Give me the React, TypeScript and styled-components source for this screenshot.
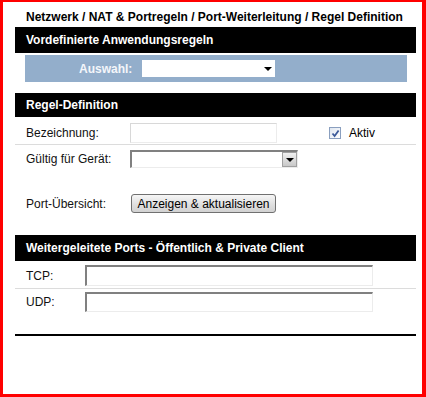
import React from "react";
import styled, { createGlobalStyle } from "styled-components";

const GlobalStyle = createGlobalStyle`
  body {
    margin: 0;
    background: #fff;
    font-family: "Liberation Sans", Arial, sans-serif;
    font-size: 12px;
    color: #000;
  }
`;

const Frame = styled.div`
  width: 426px;
  height: 397px;
  box-sizing: border-box;
  border: 3px solid #ff0000;
  border-top-width: 2px;
  border-right-width: 4px;
  padding: 0 6px 0 12px;
  background: #fff;
`;

const Title = styled.div`
  font-weight: 700;
  line-height: 14px;
  padding: 8px 0 3px 11px;
`;

const SectionBar = styled.div<{ h: number }>`
  height: ${(p) => p.h}px;
  background: #000;
  color: #fff;
  font-weight: 700;
  display: flex;
  align-items: center;
  padding-left: 11px;
`;

const PresetBar = styled.div`
  margin: 2px 9px 0 10px;
  height: 27px;
  background: #93aecb;
  display: flex;
  align-items: center;
  padding-left: 54px;
  gap: 10px;
`;

const PresetLabel = styled.span`
  color: #f4f6fa;
  font-weight: 700;
`;

const WhiteSelect = styled.div`
  position: relative;
  width: 133px;
  height: 17px;
  background: #fff;
`;

const Arrow = styled.span`
  position: absolute;
  right: 3px;
  top: 7px;
  width: 0;
  height: 0;
  border-left: 4px solid transparent;
  border-right: 4px solid transparent;
  border-top: 4px solid #000;
`;

const Section = styled.div<{ top: number }>`
  margin-top: ${(p) => p.top}px;
`;

const Row = styled.div<{ pt: number; pb: number; divider?: boolean }>`
  display: flex;
  align-items: center;
  padding: ${(p) => `${p.pt}px 0 ${p.pb}px 11px`};
  border-bottom: ${(p) => (p.divider ? "1px solid #dcdcdc" : "none")};
`;

const Label = styled.span<{ w: number }>`
  width: ${(p) => p.w}px;
  flex-shrink: 0;
  color: #111;
`;

const TextField = styled.div<{ w: number; h: number; sunken?: boolean }>`
  width: ${(p) => p.w}px;
  height: ${(p) => p.h}px;
  box-sizing: border-box;
  background: #fff;
  border: 1px solid #d8d8d8;
  border-top: ${(p) => (p.sunken ? "2px solid #808080" : "1px solid #d8d8d8")};
  border-left: ${(p) => (p.sunken ? "2px solid #808080" : "1px solid #d8d8d8")};
  border-right-color: #ececec;
  border-bottom-color: #ececec;
`;

const DropField = styled(TextField)`
  position: relative;
`;

const DropButton = styled.span`
  position: absolute;
  right: 0;
  top: 0;
  width: 15px;
  height: 15px;
  box-sizing: border-box;
  background: linear-gradient(#f0f0f0, #c8c8c8);
  border: 1px solid #a0a0a0;
  display: flex;
  align-items: center;
  justify-content: center;

  &::after {
    content: "";
    border-left: 4px solid transparent;
    border-right: 4px solid transparent;
    border-top: 4px solid #000;
  }
`;

const CheckWrap = styled.span`
  margin-left: 52px;
  display: flex;
  align-items: center;
  gap: 8px;
`;

const CheckBox = styled.span`
  width: 12px;
  height: 12px;
  box-sizing: border-box;
  border: 1px solid #8a9fbf;
  background: linear-gradient(135deg, #dfe6f0, #ffffff);
  display: flex;
  align-items: center;
  justify-content: center;
`;

const Button = styled.button`
  width: 145px;
  height: 19px;
  padding: 0;
  border: 1px solid #707070;
  border-radius: 3px;
  background: linear-gradient(#f6f6f6, #dedede 60%, #d2d2d2);
  font-family: inherit;
  font-size: 12px;
  color: #000;
`;

const BottomLine = styled.div`
  margin-top: 21px;
  border-top: 2px solid #000;
`;

export default function App() {
  return (
    <>
      <GlobalStyle />
      <Frame>
        <Title>Netzwerk / NAT &amp; Portregeln / Port-Weiterleitung / Regel Definition</Title>
        <SectionBar h={26}>Vordefinierte Anwendungsregeln</SectionBar>
        <PresetBar>
          <PresetLabel>Auswahl:</PresetLabel>
          <WhiteSelect>
            <Arrow />
          </WhiteSelect>
        </PresetBar>

        <Section top={11}>
          <SectionBar h={24}>Regel-Definition</SectionBar>
          <Row pt={6} pb={1} divider>
            <Label w={104}>Bezeichnung:</Label>
            <TextField w={147} h={20} />
            <CheckWrap>
              <CheckBox>
                <svg width="9" height="9" viewBox="0 0 9 9">
                  <path d="M1.5 4.5 L3.6 7 L7.6 1.5" fill="none" stroke="#3c5a9a" strokeWidth="1.8" />
                </svg>
              </CheckBox>
              <span>Aktiv</span>
            </CheckWrap>
          </Row>
          <Row pt={5} pb={1}>
            <Label w={104}>Gültig für Gerät:</Label>
            <DropField w={168} h={18} sunken>
              <DropButton />
            </DropField>
          </Row>
          <Row pt={25} pb={22}>
            <Label w={105}>Port-Übersicht:</Label>
            <Button>Anzeigen &amp; aktualisieren</Button>
          </Row>
        </Section>

        <SectionBar h={26}>Weitergeleitete Ports - Öffentlich &amp; Private Client</SectionBar>
        <Row pt={4} pb={2} divider>
          <Label w={59}>TCP:</Label>
          <TextField w={288} h={21} sunken />
        </Row>
        <Row pt={3} pb={1}>
          <Label w={59}>UDP:</Label>
          <TextField w={288} h={20} sunken />
        </Row>
        <BottomLine />
      </Frame>
    </>
  );
}
